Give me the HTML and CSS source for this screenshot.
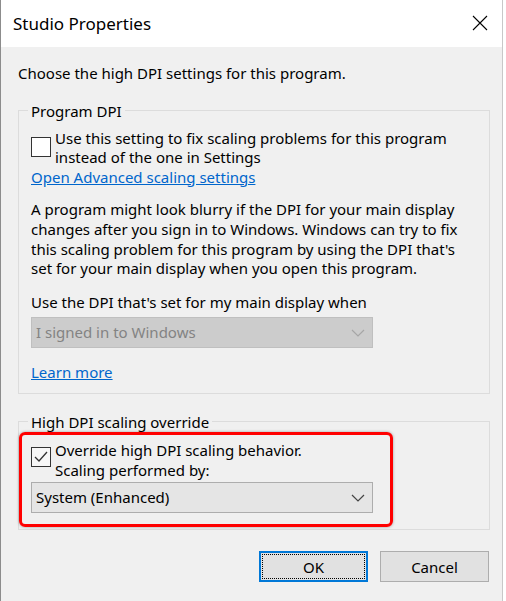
FILE: index.html
```html
<!DOCTYPE html>
<html lang="en">
<head>
  <meta charset="UTF-8">
  <title>Studio Properties</title>
  <link rel="stylesheet" href="styles.css">
</head>
<body>
  <div class="window">
    <div class="titlebar">
      <span class="title">Studio Properties</span>
      <svg class="close" width="16" height="16" viewBox="0 0 16 16">
        <path d="M1 1 L15 15 M15 1 L1 15" stroke="#000" stroke-width="1.1" fill="none"/>
      </svg>
    </div>

    <div class="content">
      <p class="intro">Choose the high DPI settings for this program.</p>

      <fieldset class="group">
        <legend>Program DPI</legend>
        <div class="check-row">
          <span class="checkbox"></span>
          <span>Use this setting to fix scaling problems for this program<br>instead of the one in Settings</span>
        </div>
        <a href="#" class="link">Open Advanced scaling settings</a>
        <p class="para">A program might look blurry if the DPI for your main display<br>changes after you sign in to Windows. Windows can try to fix<br>this scaling problem for this program by using the DPI that's<br>set for your main display when you open this program.</p>
        <div class="label">Use the DPI that's set for my main display when</div>
        <div class="select disabled">
          <span>I signed in to Windows</span>
          <svg width="14" height="8" viewBox="0 0 14 8"><path d="M1 1 L7 7 L13 1" stroke="#a6a6a6" stroke-width="1.2" fill="none"/></svg>
        </div>
        <a href="#" class="link learn">Learn more</a>
      </fieldset>

      <fieldset class="group override">
        <legend>High DPI scaling override</legend>
        <div class="highlight">
          <div class="check-row">
            <span class="checkbox checked">
              <svg width="14" height="12" viewBox="0 0 14 12"><path d="M1 6 L5 10 L13 1" stroke="#333" stroke-width="1.3" fill="none"/></svg>
            </span>
            <span>Override high DPI scaling behavior.<br>Scaling performed by:</span>
          </div>
          <div class="select">
            <span>System (Enhanced)</span>
            <svg width="14" height="8" viewBox="0 0 14 8"><path d="M1 1 L7 7 L13 1" stroke="#444" stroke-width="1.2" fill="none"/></svg>
          </div>
        </div>
      </fieldset>

      <div class="buttons">
        <button class="btn default">OK</button>
        <button class="btn">Cancel</button>
      </div>
    </div>
  </div>
</body>
</html>
```

FILE: styles.css
```css
body {
  margin: 0;
  background: #ffffff;
  font-family: "Noto Sans", "Open Sans", sans-serif;
  font-size: 15px;
  color: #000;
}
.window {
  width: 501px;
  height: 601px;
  border-left: 1px solid #8c8c8c;
  border-right: 1px solid #c8c8c8;
  display: flex;
  flex-direction: column;
}
.titlebar {
  height: 47px;
  background: #fff;
  display: flex;
  align-items: center;
  justify-content: space-between;
  padding: 0 14px 0 12px;
}
.title {
  font-size: 17px;
  margin-top: -1px;
}
.close {
  margin-top: -1px;
}
.content {
  flex: 1;
  background: #f0f0f0;
  padding: 17px 12px 0 17px;
  line-height: 19.6px;
}
.intro {
  margin: 0 0 17px 0;
}
.group {
  margin: 0;
  padding: 0 12px 10px 12px;
  border: 1px solid #dcdcdc;
}
.group legend {
  padding: 0 3px;
  margin-left: -3px;
  line-height: 20px;
}
.check-row {
  display: flex;
  align-items: flex-start;
  gap: 4px;
  margin-top: 8px;
}
.checkbox {
  width: 18px;
  height: 18px;
  border: 1px solid #333;
  background: #fff;
  margin-top: 8px;
  flex-shrink: 0;
  display: flex;
  align-items: center;
  justify-content: center;
}
.checkbox.checked {
  background: #f7f7f7;
  margin-top: 6px;
}
.link {
  display: inline-block;
  color: #0066cc;
  text-decoration: underline;
}
.para {
  margin: 13px 0 0 0;
}
.label {
  margin-top: 14px;
}
.select {
  height: 29px;
  width: 329px;
  border: 1px solid #adadad;
  background: #e5e5e5;
  display: flex;
  align-items: center;
  justify-content: space-between;
  padding: 0 7px 0 4px;
  box-sizing: content-box;
  margin-top: 5px;
}
.select.disabled {
  background: #cccccc;
  border-color: #bfbfbf;
  color: #838383;
}
.learn {
  margin-top: 15px;
}
.override {
  margin-top: 18px;
  padding-bottom: 2px;
}
.highlight {
  margin-left: -12px;
  width: 350px;
  border: 3px solid #ff0000;
  border-radius: 6px;
  padding: 0 9px 11px 9px;
  box-shadow: 0 0 3px rgba(0, 0, 0, 0.35);
}
.highlight .check-row {
  margin-top: 6px;
}
.highlight .select {
  margin-top: 2px;
}
.buttons {
  display: flex;
  justify-content: flex-end;
  gap: 12px;
  margin-top: 21px;
  padding-right: 1px;
}
.btn {
  width: 109px;
  height: 31px;
  font-family: inherit;
  font-size: 15px;
  color: #000;
  background: #e1e1e1;
  border: 1px solid #adadad;
}
.btn.default {
  border: 2px solid #0078d7;
  outline: 1px dotted #000;
  outline-offset: -4px;
}
```
